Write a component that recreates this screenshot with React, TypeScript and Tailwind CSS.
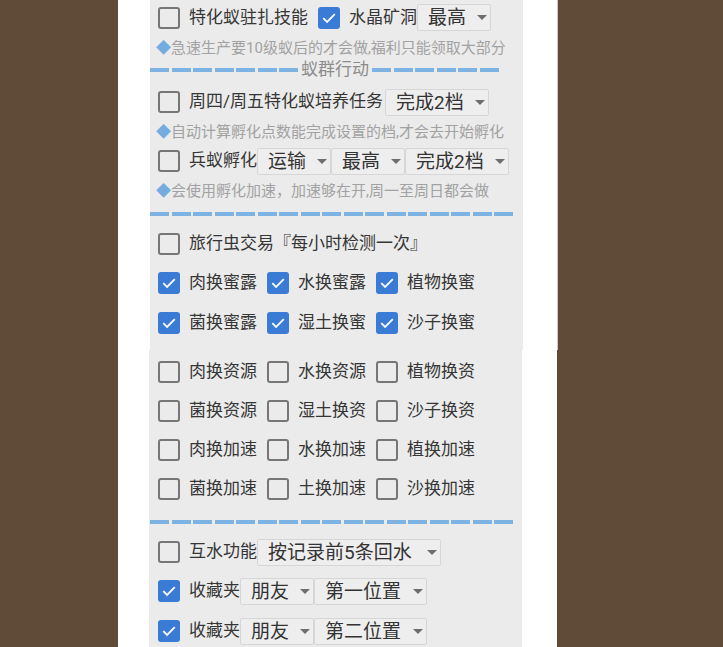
import React from 'react';

const FONT = "font-['Roboto','Noto_Sans_CJK_SC',sans-serif]";

const Box: React.FC<{ checked?: boolean }> = ({ checked }) =>
  checked ? (
    <div className="flex h-[22px] w-[22px] shrink-0 items-center justify-center rounded-[3px] bg-[#3a7bd6]">
      <svg width="16" height="16" viewBox="0 0 16 16">
        <path d="M2.3 8.2 L6.1 12 L13.8 4.2" fill="none" stroke="#fff" strokeWidth="1.8" />
      </svg>
    </div>
  ) : (
    <div className="h-[22px] w-[22px] shrink-0 rounded-[3px] border-2 border-[#767676]" />
  );

const Check: React.FC<{ label: string; checked?: boolean }> = ({ label, checked }) => (
  <div className="flex items-center">
    <Box checked={checked} />
    <span className="ml-[9px] whitespace-nowrap text-[17px] text-[#363636]">{label}</span>
  </div>
);

const Arrow = () => (
  <svg width="10" height="5" viewBox="0 0 10 5" className="shrink-0">
    <polygon points="0,0 10,0 5,5" fill="#6e6e6e" />
  </svg>
);

const Select: React.FC<{ label: string; className: string }> = ({ label, className }) => (
  <div
    className={`flex h-[27px] shrink-0 items-center justify-between rounded-[2px] border border-[#d6d6d6] bg-[#eeeeee] pl-[10px] pr-[3px] ${className}`}
  >
    <span className="whitespace-nowrap text-[19px] leading-none text-[#333]">{label}</span>
    <Arrow />
  </div>
);

const Dashes: React.FC<{ count: number }> = ({ count }) => (
  <div className="flex gap-[2.5px]">
    {Array.from({ length: count }).map((_, i) => (
      <div key={i} className="h-[4px] w-[19px] bg-[#7db3e2]" />
    ))}
  </div>
);

const Hint: React.FC<{ text: string; className: string }> = ({ text, className }) => (
  <div className={`flex h-[20px] items-center pl-[6px] text-[15px] whitespace-nowrap ${className}`}>
    <span className="text-[#74abe0]">◆</span>
    <span className="text-[#a2a2a2]">{text}</span>
  </div>
);

const grid1 = [
  [
    ['肉换蜜露', true],
    ['水换蜜露', true],
    ['植物换蜜', true],
  ],
  [
    ['菌换蜜露', true],
    ['湿土换蜜', true],
    ['沙子换蜜', true],
  ],
] as const;

const grid2 = [
  ['肉换资源', '水换资源', '植物换资'],
  ['菌换资源', '湿土换资', '沙子换资'],
  ['肉换加速', '水换加速', '植换加速'],
  ['菌换加速', '土换加速', '沙换加速'],
];

const gridMargins = ['mt-[7px]', 'mt-[9px]', 'mt-[9px]', 'mt-[9px]'];

export default function App() {
  return (
    <div className={`flex h-[647px] w-full flex-col overflow-hidden bg-[#5f4b37] ${FONT}`}>
      {/* top section */}
      <div className="ml-[118px] flex w-[440px] flex-col border-r border-[#c9c9d0] bg-white">
        <div className="ml-[32px] flex w-[373px] flex-col bg-[#ebebeb] pb-[12px]">
          <div className="flex h-[35px] items-center gap-[10px] pl-[8px]">
            <Check label="特化蚁驻扎技能" />
            <div className="flex items-center">
              <Check label="水晶矿洞" checked />
              <Select label="最高" className="w-[74px]" />
            </div>
          </div>

          <Hint text="急速生产要10级蚁后的才会做,福利只能领取大部分" className="mt-[3px]" />

          <div className="mt-[2px] flex h-[20px] items-center">
            <Dashes count={7} />
            <span className="mx-[3px] text-[17px] text-[#8c8c8c]">蚁群行动</span>
            <Dashes count={6} />
          </div>

          <div className="mt-[7px] flex h-[30px] items-center pl-[8px]">
            <Check label="周四/周五特化蚁培养任务" />
            <Select label="完成2档" className="ml-[2px] w-[104px]" />
          </div>

          <Hint text="自动计算孵化点数能完成设置的档,才会去开始孵化" className="mt-[5px]" />

          <div className="mt-[4px] flex h-[30px] items-center pl-[8px]">
            <Check label="兵蚁孵化" />
            <Select label="运输" className="w-[74px]" />
            <Select label="最高" className="w-[74px]" />
            <Select label="完成2档" className="w-[104px]" />
          </div>

          <Hint text="会使用孵化加速，加速够在开,周一至周日都会做" className="mt-[5px]" />

          <div className="mt-[3px] flex h-[20px] items-center">
            <Dashes count={17} />
          </div>

          <div className="mt-[5px] flex h-[30px] items-center pl-[8px]">
            <Check label="旅行虫交易『每小时检测一次』" />
          </div>

          {grid1.map((row, r) => (
            <div
              key={r}
              className={`flex h-[30px] items-center gap-[10px] pl-[8px] ${r === 0 ? 'mt-[9px]' : 'mt-[10px]'}`}
            >
              {row.map(([label, checked]) => (
                <Check key={label} label={label} checked={checked} />
              ))}
            </div>
          ))}
        </div>
      </div>

      {/* bottom section */}
      <div className="ml-[118px] flex w-[439px] flex-1 flex-col bg-white">
        <div className="ml-[31px] flex w-[373px] flex-1 flex-col bg-[#ebebeb] pb-[20px]">
          {grid2.map((row, r) => (
            <div key={r} className={`flex h-[30px] items-center gap-[10px] pl-[9px] ${gridMargins[r]}`}>
              {row.map((label) => (
                <Check key={label} label={label} />
              ))}
            </div>
          ))}

          <div className="mt-[8px] flex h-[20px] items-center pl-[1px]">
            <Dashes count={17} />
          </div>

          <div className="mt-[5px] flex h-[30px] items-center pl-[9px]">
            <Check label="互水功能" />
            <Select label="按记录前5条回水" className="w-[184px]" />
          </div>

          <div className="mt-[9px] flex h-[30px] items-center pl-[9px]">
            <Check label="收藏夹" checked />
            <Select label="朋友" className="w-[74px]" />
            <Select label="第一位置" className="w-[113px]" />
          </div>

          <div className="mt-[10px] flex h-[30px] items-center pl-[9px]">
            <Check label="收藏夹" checked />
            <Select label="朋友" className="w-[74px]" />
            <Select label="第二位置" className="w-[113px]" />
          </div>
        </div>
      </div>
    </div>
  );
}
